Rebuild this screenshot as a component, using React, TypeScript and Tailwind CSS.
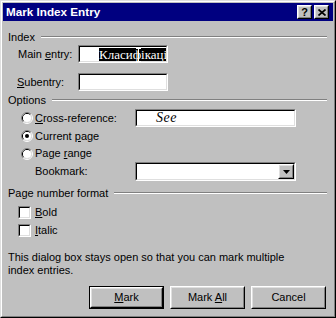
import React from 'react';

// win98-ish bevels
const sunkenOuter = 'border border-t-[#808080] border-l-[#808080] border-r-white border-b-white';
const sunkenInner = 'border border-t-black border-l-black border-r-[#dfdfdf] border-b-[#dfdfdf]';
const raisedOuter = 'border border-t-white border-l-white border-r-black border-b-black';
const raisedInner = 'border border-t-[#dfdfdf] border-l-[#dfdfdf] border-r-[#808080] border-b-[#808080]';

function Sunken({ className, innerClassName, children }: { className: string; innerClassName?: string; children?: React.ReactNode }) {
  return (
    <div className={`${sunkenOuter} ${className}`}>
      <div className={`${sunkenInner} w-full h-full bg-white ${innerClassName ?? ''}`}>{children}</div>
    </div>
  );
}

function Raised({ className, children }: { className: string; children?: React.ReactNode }) {
  return (
    <div className={`${raisedOuter} bg-[#c0c0c0] ${className}`}>
      <div className={`${raisedInner} w-full h-full flex items-center justify-center`}>{children}</div>
    </div>
  );
}

function Radio({ checked }: { checked?: boolean }) {
  return (
    <svg width="12" height="12" viewBox="0 0 12 12" className="shrink-0">
      <path d="M2.11 9.89 A5.5 5.5 0 0 1 9.89 2.11" fill="none" stroke="#808080" />
      <path d="M9.89 2.11 A5.5 5.5 0 0 1 2.11 9.89" fill="none" stroke="#ffffff" />
      <path d="M2.82 9.18 A4.5 4.5 0 0 1 9.18 2.82" fill="none" stroke="#000000" />
      <path d="M9.18 2.82 A4.5 4.5 0 0 1 2.82 9.18" fill="none" stroke="#dfdfdf" />
      <circle cx="6" cy="6" r="4" fill="#ffffff" />
      {checked && <circle cx="6" cy="6" r="2" fill="#000000" />}
    </svg>
  );
}

function Check() {
  return <Sunken className="w-[13px] h-[13px] shrink-0" />;
}

function GroupHeader({ label, className }: { label: string; className: string }) {
  return (
    <div className={`h-[14px] flex items-center ${className}`}>
      <span>{label}</span>
      <div className="flex-1 ml-[6px] h-[2px] border-t border-t-[#808080] border-b border-b-white" />
    </div>
  );
}

function Button({ children, isDefault }: { children: React.ReactNode; isDefault?: boolean }) {
  if (isDefault) {
    return (
      <div className="w-[75px] h-[23px] border border-black">
        <Raised className="w-full h-full">{children}</Raised>
      </div>
    );
  }
  return <Raised className="w-[75px] h-[23px]">{children}</Raised>;
}

export default function App() {
  return (
    <div className="w-[336px] h-[318px] bg-[#c0c0c0] font-['Liberation_Sans',Arial,sans-serif] text-[11px] leading-none text-black select-none">
      <div className="w-full h-full border border-t-[#dfdfdf] border-l-[#dfdfdf] border-r-black border-b-black">
        <div className="w-full h-full border border-t-white border-l-white border-r-[#808080] border-b-[#808080] p-px flex flex-col">
          {/* title bar */}
          <div className="h-[18px] bg-[#000080] flex items-center pl-[3px] pr-[4px]">
            <span className="flex-1 text-white font-bold text-[11.7px]">Mark Index Entry</span>
            <div className="flex gap-[2px]">
              <Raised className="w-[15px] h-[14px]">
                <span className="font-bold text-[11px] leading-none">?</span>
              </Raised>
              <Raised className="w-[15px] h-[14px]">
                <svg width="8" height="7" viewBox="0 0 8 7">
                  <path d="M0.5 0.5 L7.5 6.5 M7.5 0.5 L0.5 6.5" stroke="#000" strokeWidth="1.7" />
                </svg>
              </Raised>
            </div>
          </div>

          {/* client area */}
          <div className="flex-1 flex flex-col pl-[5px] pr-[6px]">
            <GroupHeader label="Index" className="mt-[9px]" />

            <div className="mt-[1px] h-[18px] flex items-center">
              <span className="ml-[10px] w-[60px]">Main <u>e</u>ntry:</span>
              <div className="relative">
                <Sunken className="w-[90px] h-[18px]" innerClassName="overflow-hidden flex items-center pl-[19px]">
                  <div className="bg-black text-white font-['Liberation_Serif','Times_New_Roman',serif] text-[13px] leading-[13px] h-[13px] whitespace-nowrap pr-px">
                    Класифікаці
                  </div>
                </Sunken>
                {/* mouse I-beam */}
                <svg width="5" height="14" viewBox="0 0 5 14" className="absolute left-[58px] top-[3px]">
                  <path d="M0 0.5 H5 M2.5 0.5 V13.5 M0 13.5 H5" stroke="#ffffff" strokeWidth="1" />
                </svg>
              </div>
            </div>

            <div className="mt-[10px] h-[18px] flex items-center">
              <span className="ml-[9px] w-[61px]"><u>S</u>ubentry:</span>
              <Sunken className="w-[90px] h-[18px]" />
            </div>

            <GroupHeader label="Options" className="mt-[2px]" />

            <div className="mt-[2px] h-[18px] flex items-center">
              <div className="ml-[13px] w-[114px] flex items-center gap-[2px]">
                <Radio />
                <span><u>C</u>ross-reference:</span>
              </div>
              <Sunken className="w-[161px] h-[18px]" innerClassName="flex items-center pl-[19px]">
                <span className="font-['Liberation_Serif','Times_New_Roman',serif] italic text-[14px] tracking-[0.5px]">See</span>
              </Sunken>
            </div>

            <div className="h-[18px] flex items-center">
              <div className="ml-[13px] flex items-center gap-[2px]">
                <Radio checked />
                <span>Current <u>p</u>age</span>
              </div>
            </div>

            <div className="h-[17px] flex items-center">
              <div className="ml-[13px] flex items-center gap-[2px]">
                <Radio />
                <span>Page <u>r</u>ange</span>
              </div>
            </div>

            <div className="h-[19px] flex items-center">
              <span className="ml-[27px] w-[100px]">Bookmark:</span>
              <Sunken className="w-[161px] h-[19px]" innerClassName="flex items-center justify-end">
                <Raised className="w-[16px] h-[15px]">
                  <svg width="7" height="4" viewBox="0 0 7 4">
                    <path d="M0 0 H7 L3.5 4 Z" fill="#000" />
                  </svg>
                </Raised>
              </Sunken>
            </div>

            <GroupHeader label="Page number format" className="mt-[5px]" />

            <div className="mt-[4px] h-[16px] flex items-center gap-[4px] pl-[10px]">
              <Check />
              <span><u>B</u>old</span>
            </div>
            <div className="mt-[2px] h-[16px] flex items-center gap-[4px] pl-[10px]">
              <Check />
              <span><u>I</u>talic</span>
            </div>

            <p className="mt-[13px] leading-[13px]">
              This dialog box stays open so that you can mark multiple
              <br />
              index entries.
            </p>

            <div className="mt-[9px] flex justify-end gap-[6px] pr-px">
              <Button isDefault>
                <span><u>M</u>ark</span>
              </Button>
              <Button>
                <span>Mark <u>A</u>ll</span>
              </Button>
              <Button>
                <span>Cancel</span>
              </Button>
            </div>
          </div>
        </div>
      </div>
    </div>
  );
}
